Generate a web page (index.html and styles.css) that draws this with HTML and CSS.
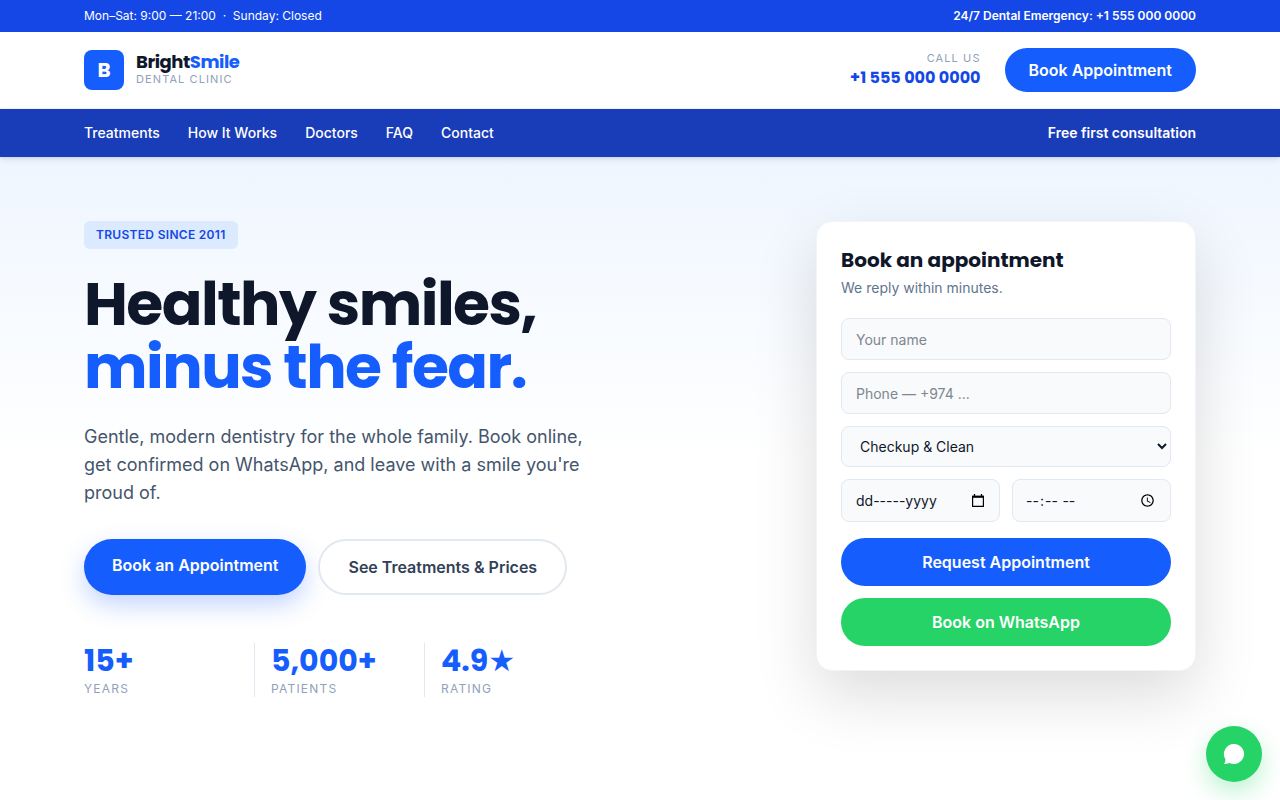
FILE: index.html
```html
<!DOCTYPE html>
<html lang="en">
<head>
<meta charset="utf-8">
<meta name="viewport" content="width=device-width, initial-scale=1">
<title>BrightSmile Dental Clinic</title>
<link rel="stylesheet" href="styles.css">
</head>
<body>

<div class="topbar">
  <div class="container row">
    <span>Mon–Sat: 9:00 — 21:00 &nbsp;·&nbsp; Sunday: Closed</span>
    <a class="emergency" href="tel:+15550000000">24/7 Dental Emergency: +1 555 000 0000</a>
  </div>
</div>

<header class="header">
  <div class="container row">
    <a class="logo" href="#">
      <span class="logo-mark">B</span>
      <span class="logo-text">
        <span class="logo-name">Bright<span class="blue">Smile</span></span>
        <span class="logo-sub">Dental Clinic</span>
      </span>
    </a>
    <div class="header-right">
      <div class="call">
        <span class="call-label">Call us</span>
        <a class="call-number" href="tel:+15550000000">+1 555 000 0000</a>
      </div>
      <a class="btn btn-small" href="#book">Book Appointment</a>
    </div>
  </div>
</header>

<nav class="nav">
  <div class="container row">
    <div class="nav-links">
      <a href="#treatments">Treatments</a>
      <a href="#how">How It Works</a>
      <a href="#doctors">Doctors</a>
      <a href="#faq">FAQ</a>
      <a href="#contact">Contact</a>
    </div>
    <span class="nav-note">Free first consultation</span>
  </div>
</nav>

<main class="hero">
  <div class="container hero-inner">
    <div class="intro">
      <span class="badge">Trusted since 2011</span>
      <h1>Healthy smiles,<br><span class="blue">minus the fear.</span></h1>
      <p class="lead">Gentle, modern dentistry for the whole family. Book online, get confirmed on WhatsApp, and leave with a smile you're proud of.</p>
      <div class="actions">
        <a class="btn btn-main" href="#book">Book an Appointment</a>
        <a class="btn btn-outline" href="#treatments">See Treatments &amp; Prices</a>
      </div>
      <div class="stats">
        <div class="stat"><strong>15+</strong><span>Years</span></div>
        <div class="stat"><strong>5,000+</strong><span>Patients</span></div>
        <div class="stat"><strong>4.9★</strong><span>Rating</span></div>
      </div>
    </div>

    <form class="card" id="book">
      <h2>Book an appointment</h2>
      <p class="card-note">We reply within minutes.</p>
      <div class="fields">
        <input class="field" type="text" placeholder="Your name" aria-label="Your name">
        <input class="field" type="tel" placeholder="Phone — +974 ..." aria-label="Phone">
        <select class="field field-select" aria-label="Treatment">
          <option>Checkup &amp; Clean</option>
          <option>Whitening</option>
          <option>Implants</option>
        </select>
        <div class="when">
          <label class="field picker">
            <input class="picker-input" type="text" placeholder="dd-----yyyy" aria-label="Date">
            <svg width="14" height="14" viewBox="0 0 14 14" fill="none" stroke="#000"><path d="M1.600 2.500h10.800v9.800H1.600z" stroke-width="1.2"/><path d="M1 2.700h12" stroke-width="2.2"/><path d="M3.500 0v3M10.500 0v3" stroke-width="1.3"/></svg>
          </label>
          <input class="field field-time" type="time" aria-label="Time">
        </div>
      </div>
      <div class="card-buttons">
        <button class="btn btn-wide" type="submit">Request Appointment</button>
        <button class="btn btn-wide btn-green" type="button">Book on WhatsApp</button>
      </div>
    </form>
  </div>
</main>

<a class="chat" href="#" aria-label="Chat on WhatsApp">
  <svg width="24" height="24" viewBox="0 0 24 24" fill="#fff"><path d="M12 2a10 10 0 1 1-4.500 18.900Q5 22 2 22q1.700-1.700 1.300-5A10 10 0 0 1 12 2z"/></svg>
</a>

</body>
</html>
```
FILE: styles.css
```css
*{box-sizing:border-box;}
body,h1,h2,p{margin:0;}
body{font:16px/24px Inter,"Liberation Sans",sans-serif;color:#0f172a;background:#fff;}
a{color:inherit;text-decoration:none;}
.blue{color:#155dfc;}
.container{max-width:1152px;margin:0 auto;padding:0 20px;}
.row{display:flex;align-items:center;justify-content:space-between;}

/* top bar */
.topbar{background:#1447e6;color:#fff;font-size:12px;line-height:16px;padding:8px 0;}
.emergency{font-weight:600;}

/* header */
.header{padding:16px 0;border-bottom:1px solid #f1f5f9;}
.logo{display:flex;align-items:center;gap:12px;}
.logo-mark{width:40px;height:40px;border-radius:8px;background:#155dfc;color:#fff;font:700 20px/40px Poppins,Inter,sans-serif;text-align:center;}
.logo-text{display:flex;flex-direction:column;}
.logo-name{font:700 18px/18px Poppins,Inter,sans-serif;letter-spacing:-0.025em;}
.logo-sub{font-size:11px;line-height:16px;letter-spacing:0.1em;text-transform:uppercase;color:#90a1b9;}
.header-right{display:flex;align-items:center;gap:24px;}
.call{display:flex;flex-direction:column;text-align:right;}
.call-label{font-size:11px;line-height:16px;letter-spacing:0.1em;text-transform:uppercase;color:#90a1b9;}
.call-number{font:700 16px/24px Poppins,Inter,sans-serif;color:#1447e6;}

.btn{display:block;border:0;border-radius:999px;background:#155dfc;color:#fff;font:600 16px/24px Inter,"Liberation Sans",sans-serif;text-align:center;cursor:pointer;}
.btn-small{padding:10px 24px;}

/* nav */
.nav{position:relative;background:#193cb8;color:#fff;font-size:14px;font-weight:500;line-height:20px;padding:14px 0;box-shadow:0 1px 3px rgba(0,0,0,0.1),0 4px 6px rgba(0,0,0,0.06);}
.nav-links{display:flex;gap:28px;}
.nav-note{font-weight:600;}

/* hero */
.hero{background:linear-gradient(#eff6ff,#fff 50%);padding:64px 0;}
.hero-inner{display:flex;justify-content:space-between;align-items:flex-start;gap:48px;}
.intro{max-width:512px;}
.badge{display:table;padding:6px 12px;border-radius:6px;background:#dbeafe;color:#1447e6;font-size:12px;font-weight:600;line-height:16px;letter-spacing:0.025em;text-transform:uppercase;}
h1{margin-top:24px;font:700 60px/63px Poppins,Inter,sans-serif;letter-spacing:-0.025em;white-space:nowrap;}
.lead{margin-top:24px;font-size:18px;line-height:28px;color:#45556c;}
.actions{display:flex;gap:12px;margin-top:32px;}
.btn-main{padding:14px 28px;box-shadow:0 10px 24px rgba(21,93,252,0.25);}
.btn-outline{padding:14px 28px;border:2px solid #e2e8f0;background:#fff;color:#314158;}
.stats{display:grid;grid-template-columns:repeat(3,1fr);max-width:510px;margin-top:48px;}
.stat{display:flex;flex-direction:column;gap:2px;}
.stat + .stat{border-left:1px solid #e2e8f0;padding-left:16px;}
.stat strong{font:700 30px/36px Poppins,"DejaVu Sans",sans-serif;color:#155dfc;}
.stat span{font-size:12px;line-height:16px;letter-spacing:0.1em;text-transform:uppercase;color:#90a1b9;}

/* booking form */
.card{width:380px;flex-shrink:0;padding:24px;border:1px solid #f1f5f9;border-radius:16px;background:#fff;box-shadow:0 24px 64px rgba(0,0,0,0.14);}
.card h2{font:700 20px/28px Poppins,Inter,sans-serif;}
.card-note{margin-top:4px;font-size:14px;line-height:20px;color:#62748e;}
.fields{display:flex;flex-direction:column;gap:12px;margin-top:20px;}
.field{width:100%;min-width:0;height:42px;padding:0 14px;border:1px solid #e2e8f0;border-radius:8px;background:#f8fafc;color:#0f172a;font:14px/20px Inter,"Liberation Sans",sans-serif;}
.field::placeholder{color:#80868f;}
.field-select{height:41px;padding:0 0 0 14px;}
.when{display:grid;grid-template-columns:1fr 1fr;gap:12px;}
.picker{display:flex;align-items:center;height:43px;}
.field-time{height:43px;padding:0 12px;}
.picker-input{flex:1;width:0;min-width:0;padding:0;border:0;background:none;font:inherit;color:inherit;}
.picker-input::placeholder{color:#0f172a;}
.card-buttons{display:flex;flex-direction:column;gap:12px;margin-top:16px;}
.btn-wide{width:100%;padding:12px;}
.btn-green{background:#25d366;}

/* floating chat */
.chat{position:fixed;right:18px;bottom:18px;display:flex;align-items:center;justify-content:center;width:56px;height:56px;border-radius:50%;background:#25d366;box-shadow:0 10px 24px rgba(37,211,102,0.3);}
```
